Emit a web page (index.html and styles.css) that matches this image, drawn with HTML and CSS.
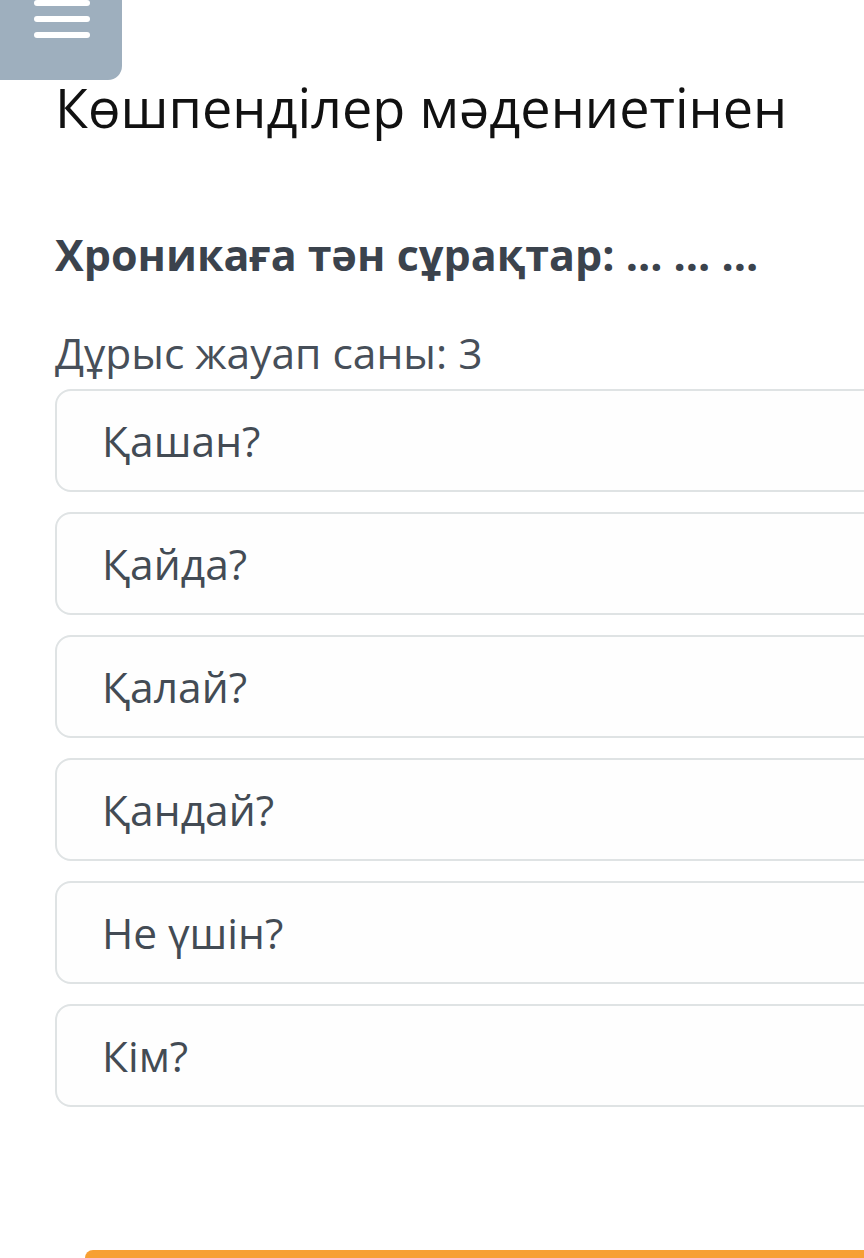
FILE: index.html
```html
<!DOCTYPE html>
<html lang="kk">
<head>
<meta charset="utf-8">
<link rel="stylesheet" href="styles.css">
</head>
<body>
<div class="page">
  <header class="topbar">
    <button class="menu-btn" aria-label="Menu">
      <span class="bar"></span>
      <span class="bar"></span>
      <span class="bar"></span>
    </button>
  </header>
  <main class="content">
    <h1 class="title">Көшпенділер мәдениетінен</h1>
    <p class="question">Хроникаға тән сұрақтар: ... ... ...</p>
    <p class="count">Дұрыс жауап саны: 3</p>
    <ul class="options">
      <li class="option">Қашан?</li>
      <li class="option">Қайда?</li>
      <li class="option">Қалай?</li>
      <li class="option">Қандай?</li>
      <li class="option">Не үшін?</li>
      <li class="option">Кім?</li>
    </ul>
  </main>
  <div class="footer">
    <div class="submit-bar"></div>
  </div>
</div>
</body>
</html>
```

FILE: styles.css
```css
html, body {
  margin: 0;
  padding: 0;
  background: #ffffff;
}
body {
  width: 864px;
  height: 1258px;
  overflow: hidden;
  font-family: "Open Sans", "Noto Sans", sans-serif;
}
.page {
  display: flex;
  flex-direction: column;
  height: 1258px;
}
.topbar {
  height: 80px;
  display: flex;
}
.menu-btn {
  width: 122px;
  height: 80px;
  border: 0;
  padding: 0 0 42px 34px;
  margin: 0;
  background: #9eafbe;
  border-radius: 0 0 14px 0;
  display: flex;
  flex-direction: column;
  justify-content: flex-end;
  gap: 10px;
}
.bar {
  display: block;
  width: 56px;
  height: 9px;
  border-radius: 3px;
  background: #ffffff;
}
.content {
  padding-left: 55px;
}
.title {
  margin: 0;
  font-weight: 400;
  font-size: 54px;
  line-height: 54px;
  color: #111111;
  white-space: nowrap;
}
.question {
  margin: 93px 0 0;
  font-weight: 700;
  font-size: 43px;
  line-height: 56px;
  color: #3b434d;
  white-space: nowrap;
}
.count {
  margin: 42px 0 0;
  font-size: 42.5px;
  line-height: 56px;
  color: #474f59;
  white-space: nowrap;
}
.options {
  list-style: none;
  margin: 8px 0 0;
  padding: 0;
  display: flex;
  flex-direction: column;
  gap: 20px;
}
.option {
  box-sizing: border-box;
  width: 860px;
  height: 103px;
  border: 2px solid #dfe3e4;
  border-radius: 16px;
  padding-left: 45px;
  display: flex;
  align-items: center;
  font-size: 42.5px;
  color: #434b54;
  background: #fefefe;
}
.footer {
  margin-top: auto;
  padding-left: 85px;
}
.submit-bar {
  height: 8px;
  background: #f7a033;
  border-radius: 14px 0 0 0;
}
```
